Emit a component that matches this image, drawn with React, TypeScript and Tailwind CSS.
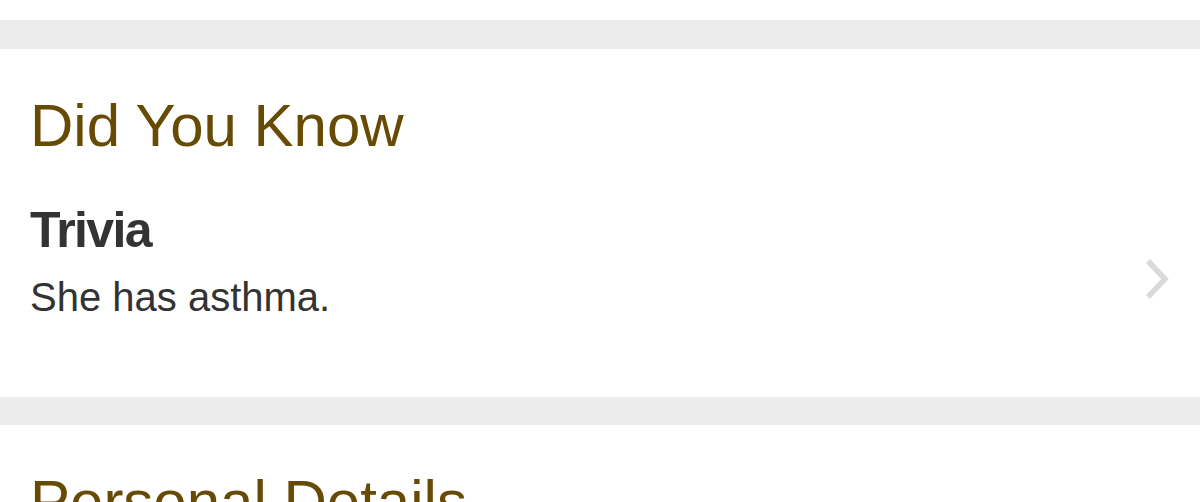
export default function App() {
    return (
        <div className="w-[1200px] h-[502px] overflow-hidden bg-white font-['Liberation_Sans',Arial,sans-serif]">
            <div className="h-[20px] bg-white" />
            <div className="h-[29px] bg-[#ececec]" />
            <section className="bg-white pt-[47px] pb-[80px] pl-[30px] pr-[28px]">
                <h2 className="text-[60px] leading-none text-[#674b05]">Did You Know</h2>
                <div className="mt-[49px] flex items-center justify-between">
                    <div>
                        <h3 className="text-[50px] leading-none font-bold tracking-[-1.6px] text-[#333333]">Trivia</h3>
                        <p className="mt-[22px] text-[40px] leading-none text-[#333333]">She has asthma.</p>
                    </div>
                    <svg width="30" height="44" viewBox="0 0 30 44" className="mt-[36px]">
                        <path d="M6 4 L23 22 L6 40" fill="none" stroke="#dadada" strokeWidth="5.5" />
                    </svg>
                </div>
            </section>
            <div className="h-[28px] bg-[#ececec]" />
            <section className="bg-white pt-[47px] pl-[30px]">
                <h2 className="text-[60px] leading-none text-[#674b05]">Personal Details</h2>
            </section>
        </div>
    )
}
